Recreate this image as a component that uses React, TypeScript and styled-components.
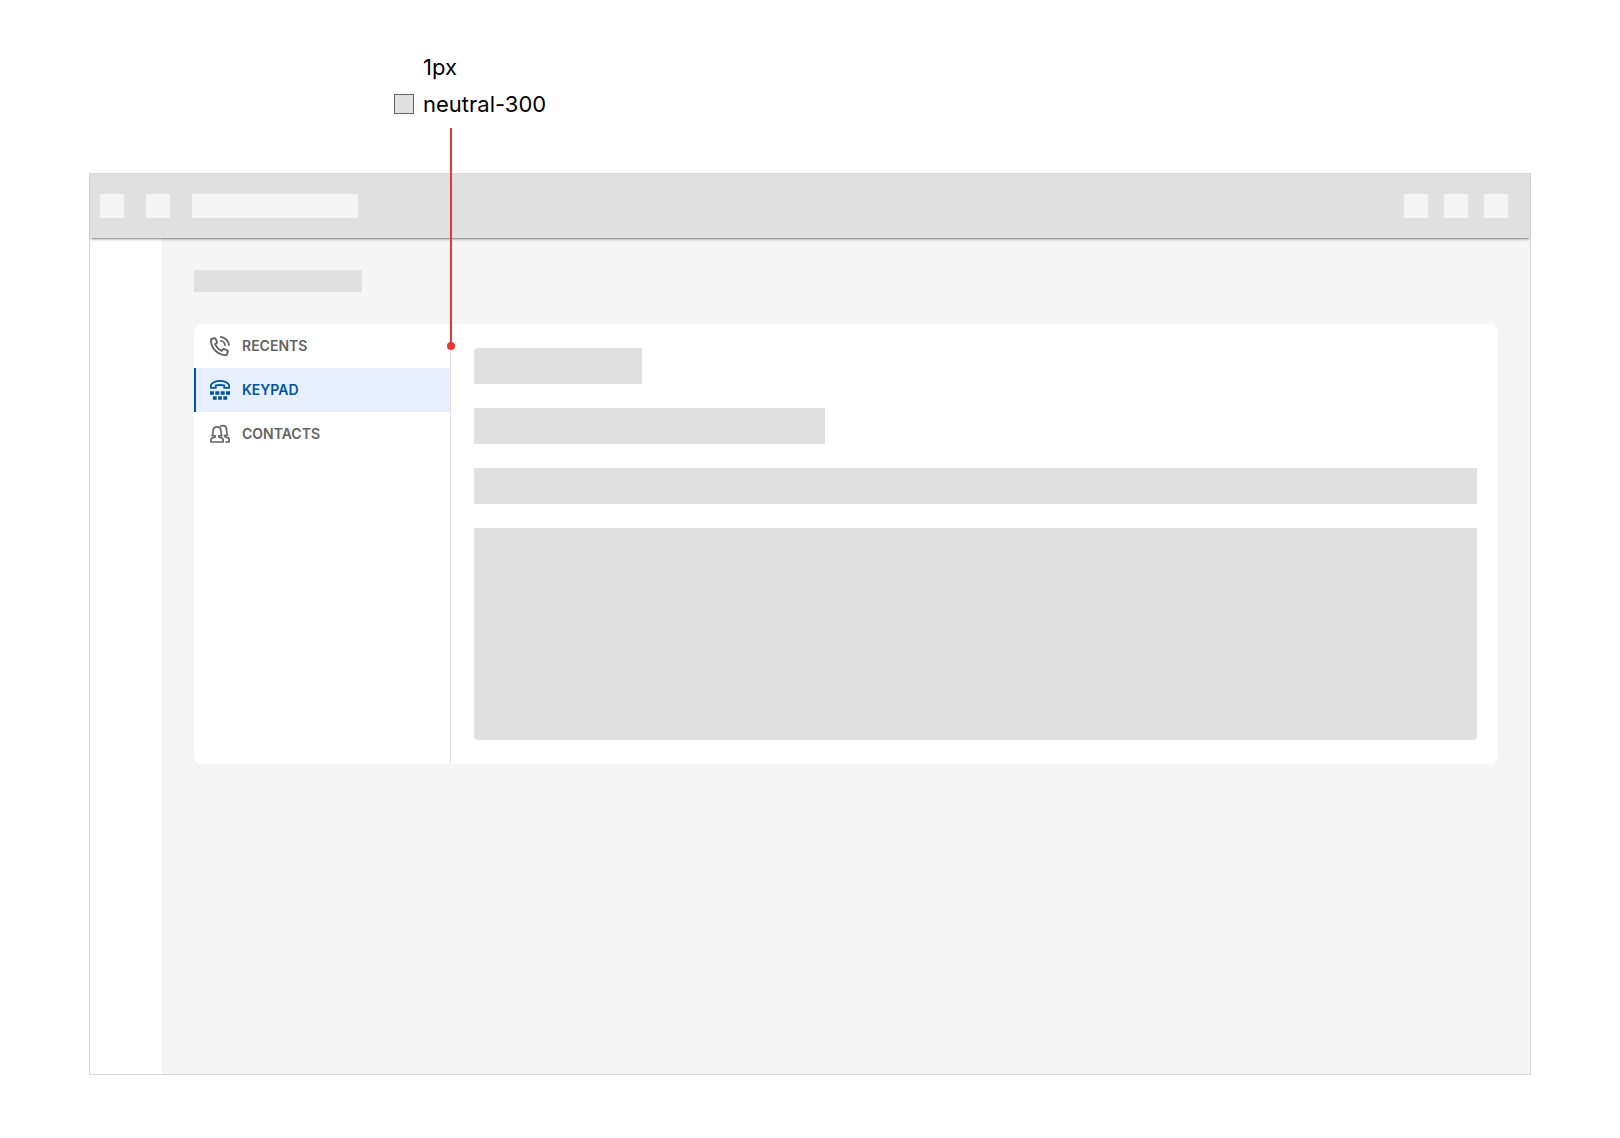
import React from "react";
import styled, { createGlobalStyle } from "styled-components";

const color = {
  neutral100: "#f5f5f5",
  neutral300: "#e0e0e0",
  frame: "#d8d8d8",
  muted: "#636363",
  active: "#00539f",
  activeBg: "#e8effc",
  callout: "#e7352f",
};

const GlobalStyle = createGlobalStyle`
  *, *::before, *::after { box-sizing: border-box; }
  body {
    margin: 0;
    background: #fff;
    font-family: Inter, "Liberation Sans", sans-serif;
  }
`;

const Page = styled.main`
  padding: 48px 89px 63px;
`;

const Legend = styled.div`
  display: grid;
  grid-template-columns: 20px auto;
  grid-auto-rows: 37px;
  align-items: center;
  column-gap: 9px;
  height: 125px;
  padding-left: 305px;
  color: #000;
  font-size: 22px;
  line-height: 28px;
`;

const LegendText = styled.span`
  grid-column: 2;
`;

const Swatch = styled.span`
  width: 20px;
  height: 20px;
  border: 1px solid ${color.muted};
  background: ${color.neutral300};
`;

const Frame = styled.section`
  display: flex;
  flex-direction: column;
  min-height: 902px;
  border: 1px solid ${color.frame};
`;

const Header = styled.header`
  position: relative;
  display: flex;
  align-items: center;
  justify-content: space-between;
  height: 64px;
  padding: 0 22px 0 10px;
  background: ${color.neutral300};
  box-shadow: 0 2px 2px -1px rgba(0, 0, 0, 0.44), 0 3px 4px -1px rgba(0, 0, 0, 0.08);
`;

const HeaderGroup = styled.div<{ $gap: number }>`
  display: flex;
  gap: ${({ $gap }) => $gap}px;
`;

const HeaderBlock = styled.div<{ $width?: number }>`
  width: ${({ $width = 24 }) => $width}px;
  height: 24px;
  background: ${color.neutral100};
`;

const Body = styled.div`
  display: flex;
  flex: 1;
`;

const Rail = styled.aside`
  width: 72px;
  background: #fff;
`;

const Content = styled.div`
  flex: 1;
  padding: 32px;
  background: ${color.neutral100};
`;

const TitleBlock = styled.div`
  width: 168px;
  height: 22px;
  margin-bottom: 32px;
  background: ${color.neutral300};
`;

const Card = styled.div`
  display: flex;
  border-radius: 8px;
  background: #fff;
`;

const Nav = styled.nav`
  position: relative;
  width: 257px;
  border-right: 1px solid ${color.neutral300};
`;

const NavItem = styled.a<{ $active?: boolean }>`
  display: flex;
  align-items: center;
  gap: 12px;
  height: 44px;
  padding-left: 14px;
  border-left: 2px solid ${({ $active }) => ($active ? color.active : "transparent")};
  background: ${({ $active }) => ($active ? color.activeBg : "transparent")};
  color: ${({ $active }) => ($active ? color.active : color.muted)};
  font-size: 14px;
  font-weight: 600;
  line-height: 20px;
  text-decoration: none;
`;

const Icon = styled.svg`
  width: 20px;
  height: 20px;
  flex: none;
`;

const Callout = styled.span`
  position: absolute;
  top: -196px;
  right: -2px;
  width: 2px;
  height: 218px;
  background: ${color.callout};

  &::after {
    content: "";
    position: absolute;
    bottom: -4px;
    left: -3px;
    width: 8px;
    height: 8px;
    border-radius: 50%;
    background: ${color.callout};
  }
`;

const Panel = styled.div`
  display: flex;
  flex: 1;
  flex-direction: column;
  gap: 24px;
  padding: 24px 21px 24px 23px;
`;

const Block = styled.div<{ $width?: string; $height?: number; $radius?: string }>`
  width: ${({ $width = "100%" }) => $width};
  height: ${({ $height = 36 }) => $height}px;
  border-radius: ${({ $radius = "0" }) => $radius};
  background: ${color.neutral300};
`;

const RecentsIcon = () => (
  <Icon viewBox="0 0 20 20" fill="none" stroke="currentColor" strokeWidth="1.9" strokeLinejoin="round" aria-hidden="true">
    <path d="M1.7 3 4.6 2.2Q5.4 2 5.7 2.8L7 6Q7.2 6.5 6.7 6.9L5.1 8.3Q7.2 12.7 11.6 14.9L13 13.3Q13.4 12.8 14 13L17.3 14.4Q18 14.7 17.8 15.4L17 18.3Q16.8 19.1 16 19.1A15.1 15.1 0 0 1 .95 4Q.95 3.2 1.7 3Z" />
    <path d="M10.2 1A8.8 8.8 0 0 1 19 9.8M10.2 4.9A4.9 4.9 0 0 1 15.1 9.8" />
  </Icon>
);

const KeypadIcon = () => (
  <Icon viewBox="0 0 20 20" aria-hidden="true">
    <path
      d="M.9 7.9V5Q3.4 .9 10 .9T19.1 5V7.9H14.2V5.3Q10 4.7 5.8 5.3V7.9Z"
      fill="none"
      stroke="currentColor"
      strokeWidth="1.8"
      strokeLinejoin="round"
    />
    <path
      fill="currentColor"
      d="M0 11.2h4v3.6h-4zM5.3 11.2h4v3.6h-4zM10.7 11.2h4v3.6h-4zM16 11.2h4v3.6h-4zM2.9 16.2h3.8v3.6h-3.8zM8.1 16.2h3.8v3.6h-3.8zM13.3 16.2h3.8v3.6h-3.8z"
    />
  </Icon>
);

const ContactsIcon = () => (
  <Icon viewBox="0 0 20 20" fill="none" stroke="currentColor" strokeWidth="1.7" strokeLinejoin="round" aria-hidden="true">
    <path d="M.9 18V15.4Q.9 14.5 1.8 14.2L5.3 13V12.1L2.1 11.6Q3.1 10.4 3.1 7Q3.1 2.8 7 2.8T10.9 7Q10.9 10.4 11.9 11.6L8.7 12.1V13L12.2 14.2Q13.1 14.5 13.1 15.4V18Z" />
    <path d="M10.2 2.2Q11.2 1.7 12.8 1.7Q16.6 1.7 16.6 6Q16.6 9.6 17.6 11L14.6 11.5V12.5L18.2 13.9Q19.1 14.3 19.1 15.2V18H15.3" />
  </Icon>
);

const navItems = [
  { label: "RECENTS", href: "#recents", Glyph: RecentsIcon },
  { label: "KEYPAD", href: "#keypad", Glyph: KeypadIcon, active: true },
  { label: "CONTACTS", href: "#contacts", Glyph: ContactsIcon },
];

export default function App() {
  return (
    <>
      <GlobalStyle />
      <Page>
        <Legend>
          <LegendText>1px</LegendText>
          <Swatch />
          <LegendText>neutral-300</LegendText>
        </Legend>
        <Frame>
          <Header>
            <HeaderGroup $gap={22}>
              <HeaderBlock />
              <HeaderBlock />
              <HeaderBlock $width={166} />
            </HeaderGroup>
            <HeaderGroup $gap={16}>
              <HeaderBlock />
              <HeaderBlock />
              <HeaderBlock />
            </HeaderGroup>
          </Header>
          <Body>
            <Rail />
            <Content>
              <TitleBlock />
              <Card>
                <Nav aria-label="Phone">
                  {navItems.map(({ label, href, Glyph, active }) => (
                    <NavItem key={label} href={href} $active={active} aria-current={active ? "page" : undefined}>
                      <Glyph />
                      {label}
                    </NavItem>
                  ))}
                  <Callout />
                </Nav>
                <Panel>
                  <Block $width="168px" $radius="4px 0 0 0" />
                  <Block $width="35%" />
                  <Block />
                  <Block $height={212} $radius="0 0 4px 4px" />
                </Panel>
              </Card>
            </Content>
          </Body>
        </Frame>
      </Page>
    </>
  );
}
